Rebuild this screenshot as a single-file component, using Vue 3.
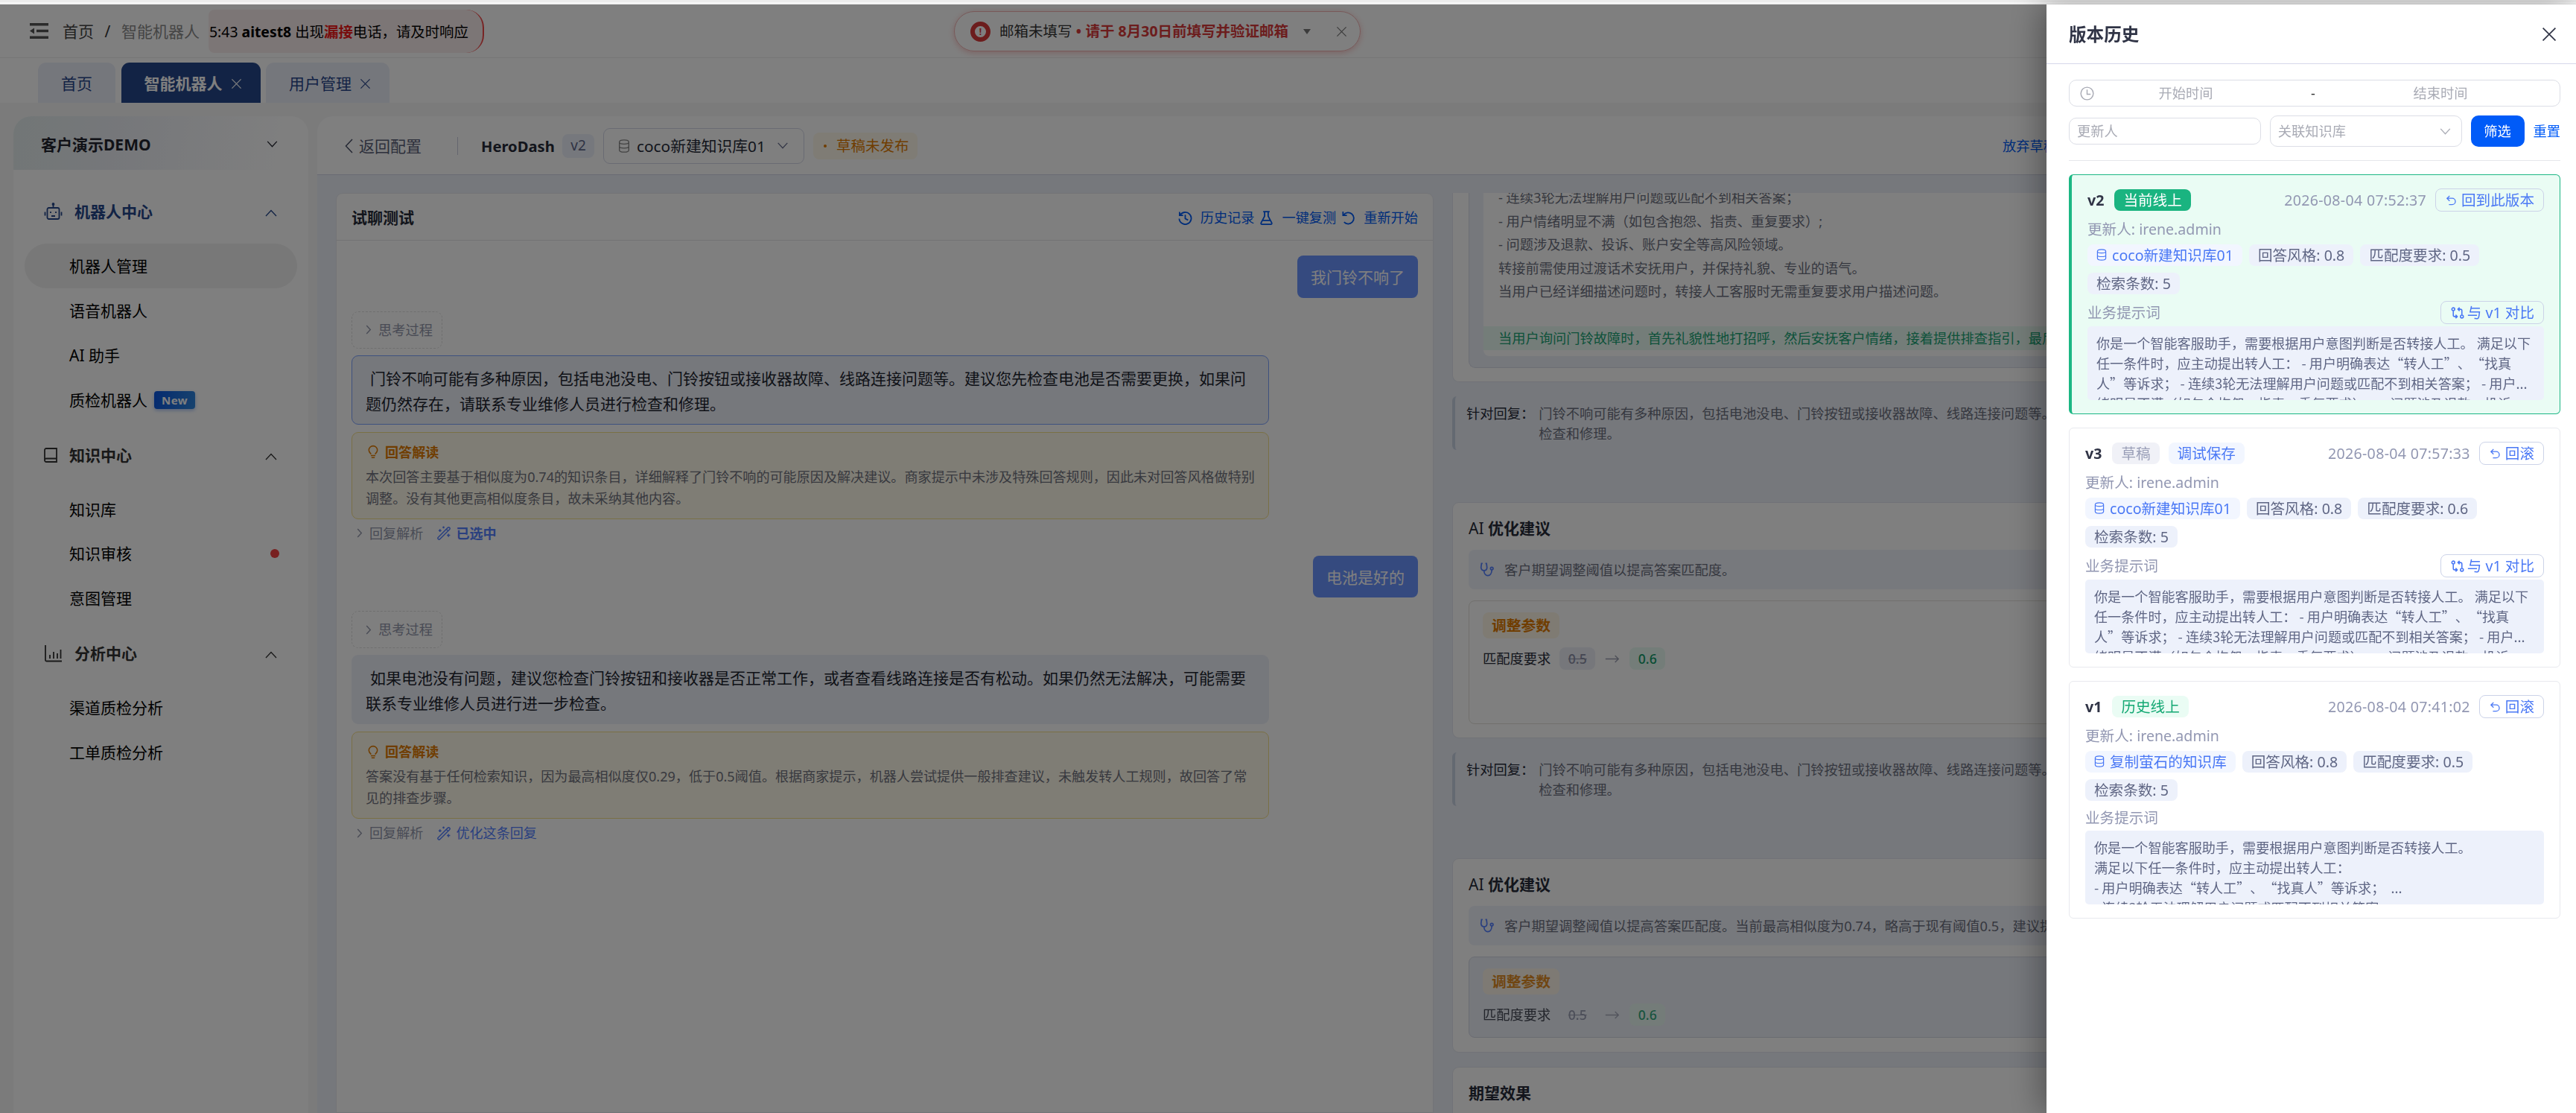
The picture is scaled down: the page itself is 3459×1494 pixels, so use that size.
<script setup>
  import { ref } from 'vue';

  const tabs = [
    { name: '首页' },
    { name: '智能机器人', active: true, closable: true },
    { name: '用户管理', closable: true }
  ];

  const menu = [
    {
      name: '机器人中心', icon: 'robot', size: 25, current: true,
      items: [
        { name: '机器人管理', active: true },
        { name: '语音机器人' },
        { name: 'AI 助手' },
        { name: '质检机器人', isNew: true }
      ]
    },
    {
      name: '知识中心', icon: 'book', size: 18,
      items: [{ name: '知识库' }, { name: '知识审核', dot: true }, { name: '意图管理' }]
    },
    {
      name: '分析中心', icon: 'chart', size: 25,
      items: [{ name: '渠道质检分析' }, { name: '工单质检分析' }]
    }
  ];

  const dialogs = [
    {
      question: '我门铃不响了',
      answer: '门铃不响可能有多种原因，包括电池没电、门铃按钮或接收器故障、线路连接问题等。建议您先检查电池是否需要更换，如果问\n题仍然存在，请联系专业维修人员进行检查和修理。',
      explain: '本次回答主要基于相似度为0.74的知识条目，详细解释了门铃不响的可能原因及解决建议。商家提示中未涉及特殊回答规则，因此未对回答风格做特别\n调整。没有其他更高相似度条目，故未采纳其他内容。',
      action: '已选中',
      selected: true
    },
    {
      question: '电池是好的',
      answer: '如果电池没有问题，建议您检查门铃按钮和接收器是否正常工作，或者查看线路连接是否有松动。如果仍然无法解决，可能需要\n联系专业维修人员进行进一步检查。',
      explain: '答案没有基于任何检索知识，因为最高相似度仅0.29，低于0.5阈值。根据商家提示，机器人尝试提供一般排查建议，未触发转人工规则，故回答了常\n见的排查步骤。',
      action: '优化这条回复'
    }
  ];

  const rules = [
    '- 连续3轮无法理解用户问题或匹配不到相关答案；',
    '- 用户情绪明显不满（如包含抱怨、指责、重复要求）;',
    '- 问题涉及退款、投诉、账户安全等高风险领域。',
    '转接前需使用过渡话术安抚用户，并保持礼貌、专业的语气。',
    '当用户已经详细描述问题时，转接人工客服时无需重复要求用户描述问题。',
    ''
  ];

  const suggestions = [
    { text: '客户期望调整阈值以提高答案匹配度。' },
    {
      text: '客户期望调整阈值以提高答案匹配度。当前最高相似度为0.74，略高于现有阈值0.5，建议提高阈值。',
      done: true
    }
  ];

  const longPrompt = '你是一个智能客服助手，需要根据用户意图判断是否转接人工。 满足以下\n任一条件时，应主动提出转人工： - 用户明确表达“转人工”、“找真\n人”等诉求； - 连续3轮无法理解用户问题或匹配不到相关答案； - 用户...\n绪明显不满（如包含抱怨、指责、重复要求）； - 问题涉及退款、投诉、';

  const versions = [
    {
      id: 'v2', online: true, tags: [{ name: '当前线上', type: 'solid' }],
      time: '2026-08-04 07:52:37', back: '回到此版本', library: 'coco新建知识库01',
      match: '0.5', compare: '与 v1 对比', prompt: longPrompt
    },
    {
      id: 'v3', tags: [{ name: '草稿', type: 'gray' }, { name: '调试保存', type: 'blue' }],
      time: '2026-08-04 07:57:33', back: '回滚', library: 'coco新建知识库01',
      match: '0.6', compare: '与 v1 对比', prompt: longPrompt
    },
    {
      id: 'v1', tags: [{ name: '历史线上', type: 'green' }],
      time: '2026-08-04 07:41:02', back: '回滚', library: '复制萤石的知识库',
      match: '0.5',
      prompt: '你是一个智能客服助手，需要根据用户意图判断是否转接人工。\n满足以下任一条件时，应主动提出转人工：\n- 用户明确表达“转人工”、“找真人”等诉求；  ...\n- 连续3轮无法理解用户问题或匹配不到相关答案；'
    }
  ];

  const drawerVisible = ref(true);
</script>

<template>
  <div class="app" lang="zh-CN">
    <svg class="sprite">
      <symbol id="close" viewBox="0 0 16 16"><path d="M.5 .5l15 15M15.500 .5l-15 15" /></symbol>
      <symbol id="down" viewBox="0 0 16 10"><path d="M1 1l7 7.500L15 1" /></symbol>
      <symbol id="up" viewBox="0 0 16 10"><path d="M1 9l7-7.500L15 9" /></symbol>
      <symbol id="left" viewBox="0 0 11 20"><path d="M10 1L1.500 10l8.500 9" /></symbol>
      <symbol id="right" viewBox="0 0 8 14"><path d="M1 1l5.500 6L1 13" /></symbol>
      <symbol id="robot" viewBox="0 0 24 24">
        <path d="M12 2.500V7M6 7h12a2 2 0 0 1 2 2v11a2 2 0 0 1-2 2H6a2 2 0 0 1-2-2V9a2 2 0 0 1 2-2zM1 12.500v5M23 12.500v5M9.500 18h5M8.500 12v2M15.500 12v2M12 1.500v1.500" />
        <circle cx="12" cy="2" r="1" />
      </symbol>
      <symbol id="book" viewBox="0 0 18 20"><path d="M3 1h14v18H3a2 2 0 0 1-2-2V3a2 2 0 0 1 2-2zM1 16.500a2 2 0 0 1 2-2h14" /></symbol>
      <symbol id="chart" viewBox="0 0 24 24"><path d="M1.500 1v20a1.500 1.500 0 0 0 1.500 1.500h20.500M7.500 14v5M12.500 10v9M17.500 12v7M22 7v12" /></symbol>
      <symbol id="db" viewBox="0 0 16 20">
        <path d="M1 4c0-4 14-4 14 0v12c0 4-14 4-14 0zM1 4.500c0 3.500 14 3.500 14 0M1 10.500c0 3.500 14 3.500 14 0" />
      </symbol>
      <symbol id="history" viewBox="0 0 20 20"><path d="M2.500 6.500A8.500 8.500 0 1 1 1.500 11M2 1.500v5h5M10 5.500V11l4 2" /></symbol>
      <symbol id="reload" viewBox="0 0 20 20"><path d="M3.500 5.500A8 8 0 1 1 4 16M2.500 1v5.500H8" /></symbol>
      <symbol id="flask" viewBox="0 0 18 20"><path d="M4.500 1.200h9M6.500 1.500v6L1.500 17c-.5 1.200 0 2 1.300 2h12.400c1.300 0 1.800-.8 1.300-2l-5-9.500v-6M4 13.500h10" /></symbol>
      <symbol id="bulb" viewBox="0 0 16 20"><path d="M5 13.500C3.500 12 1.500 10.500 1.500 7.300a6.500 6.300 0 0 1 13 0c0 3.200-2 4.700-3.500 6.200M4.500 15.800h7M5.500 18.800h5" /></symbol>
      <symbol id="wand" viewBox="0 0 20 20">
        <path d="M1.500 16L15 2.500a1.600 1.600 0 0 1 2.500 2.500L4 18.500a1.600 1.600 0 0 1-2.500-2.500zM13 4.500l2.500 2.500M4 4.500v4M2 6.500h4M9 .5v3M7.500 2h3M16 11v4.500M13.800 13.200h4.500" />
      </symbol>
      <symbol id="steth" viewBox="0 0 20 20">
        <path d="M4 1.500H2.500L1.800 7c.2 3 2 4.500 4.200 4.500s4.200-1.500 4.200-4.500l-.7-5.500H8M6 11.500c0 9.500 11 9.500 11-1" />
        <circle cx="17" cy="8.500" r="1.900" />
      </symbol>
      <symbol id="clock" viewBox="0 0 20 20"><circle cx="10" cy="10" r="8.800" /><path d="M10 4.500V11h5" /></symbol>
      <symbol id="undo" viewBox="0 0 16 16"><path d="M5.500 1L1.500 4.800l4 4M1.500 4.800h8a4.800 4.800 0 0 1 0 9.600H4.500" /></symbol>
      <symbol id="compare" viewBox="0 0 20 18">
        <circle cx="3.500" cy="3.500" r="2.200" /><circle cx="16.500" cy="14.500" r="2.200" />
        <path d="M3.500 6v6.500a2 2 0 0 0 2 2H9M7 12l2.500 2.500L7 17M16.500 12V5.500a2 2 0 0 0-2-2H11M13 1l-2.500 2.500L13 6" />
      </symbol>
      <symbol id="arrow" viewBox="0 0 20 12"><path d="M0 6h19M14 1l5 5-5 5" /></symbol>
    </svg>

    <div class="browser-edge"></div>

    <header class="topbar">
      <svg class="fold" viewBox="0 0 25 21">
        <path d="M0 0h25v3.500H0zM9 8.700h16v3.500H9zM0 17.500h25V21H0zM0 10.500l6-4v8z" />
      </svg>
      <span class="crumb">首页</span>
      <span class="slash">/</span>
      <span class="crumb muted">智能机器人</span>
      <div class="missed">5:43 <b>aitest8</b> 出现<b class="red">漏接</b>电话，请及时响应</div>
      <div class="mail">
        <i class="warn">!</i>
        <span class="mail-label">邮箱未填写</span>
        <b class="mail-dot">•</b>
        <b class="mail-text">请于 8月30日前填写并验证邮箱</b>
        <i class="triangle"></i>
        <svg class="ico mail-close"><use href="#close" /></svg>
      </div>
    </header>

    <nav class="tabs">
      <div v-for="tab in tabs" :key="tab.name" class="tab" :class="{ active: tab.active }">
        {{ tab.name }}
        <svg v-if="tab.closable" class="ico tab-close"><use href="#close" /></svg>
      </div>
    </nav>

    <div class="layout">
      <aside class="sidebar">
        <div class="customer">
          客户演示DEMO
          <svg class="ico chev-down"><use href="#down" /></svg>
        </div>
        <div v-for="group in menu" :key="group.name" class="group" :class="{ current: group.current }">
          <div class="group-title">
            <svg class="ico" :style="{ width: group.size + 'px' }"><use :href="'#' + group.icon" /></svg>
            {{ group.name }}
            <svg class="ico chev-up"><use href="#up" /></svg>
          </div>
          <div v-for="item in group.items" :key="item.name" class="item" :class="{ active: item.active }">
            {{ item.name }}
            <span v-if="item.isNew" class="new">New</span>
            <i v-if="item.dot" class="dot"></i>
          </div>
        </div>
      </aside>

      <main class="main">
        <div class="main-head">
          <svg class="ico back-icon"><use href="#left" /></svg>
          <span class="back">返回配置</span>
          <i class="divider"></i>
          <b class="bot-name">HeroDash</b>
          <span class="ver">v2</span>
          <div class="lib-select">
            <svg class="ico lib-db"><use href="#db" /></svg>
            <span class="lib-name">coco新建知识库01</span>
            <svg class="ico lib-chev"><use href="#down" /></svg>
          </div>
          <span class="draft"><i></i>草稿未发布</span>
          <span class="discard">放弃草稿</span>
        </div>

        <div class="content">
          <section class="chat">
            <div class="chat-head">
              <b>试聊测试</b>
              <div class="chat-actions">
                <svg class="ico"><use href="#history" /></svg><span>历史记录</span>
                <svg class="ico"><use href="#flask" /></svg><span>一键复测</span>
                <svg class="ico"><use href="#reload" /></svg><span>重新开始</span>
              </div>
            </div>
            <div class="chat-body">
              <div v-for="d in dialogs" :key="d.question" class="dialog">
                <div class="question">{{ d.question }}</div>
                <div class="think"><svg class="ico chev-right"><use href="#right" /></svg>思考过程</div>
                <div class="answer" :class="{ selected: d.selected }">{{ d.answer }}</div>
                <div class="explain">
                  <div class="explain-title"><svg class="ico"><use href="#bulb" /></svg>回答解读</div>
                  <p>{{ d.explain }}</p>
                </div>
                <div class="links">
                  <svg class="ico chev-right"><use href="#right" /></svg>回复解析
                  <span class="optimize" :class="{ bold: d.selected }">
                    <svg class="ico"><use href="#wand" /></svg>{{ d.action }}
                  </span>
                </div>
              </div>
            </div>
          </section>

          <section class="advice">
            <div class="card first">
              <div class="rule-box">
                <div class="rules">
                  <p v-for="(rule, i) in rules" :key="i">{{ rule }}</p>
                  <p class="added">当用户询问门铃故障时，首先礼貌性地打招呼，然后安抚客户情绪，接着提供排查指引，最后引导</p>
                </div>
              </div>
            </div>
            <template v-for="s in suggestions" :key="s.text">
              <div class="quote">
                <span class="quote-label">针对回复：</span>
                <p>门铃不响可能有多种原因，包括电池没电、门铃按钮或接收器故障、线路连接问题等。<br>检查和修理。</p>
              </div>
              <div class="card suggest" :class="{ done: s.done }">
                <div class="card-title"><span>AI</span> 优化建议</div>
                <div class="diagnosis"><svg class="ico"><use href="#steth" /></svg>{{ s.text }}</div>
                <div class="adjust">
                  <span class="adjust-tag">调整参数</span>
                  <div class="param">
                    匹配度要求
                    <span class="old">0.5</span>
                    <svg class="ico"><use href="#arrow" /></svg>
                    <span class="new-value">0.6</span>
                  </div>
                </div>
              </div>
            </template>
            <div class="card expect"><div class="card-title">期望效果</div></div>
          </section>
        </div>
      </main>
    </div>

    <div v-if="drawerVisible" class="mask">
      <div class="drawer">
        <div class="drawer-head">
          版本历史
          <svg class="ico drawer-close" @click="drawerVisible = false"><use href="#close" /></svg>
        </div>
        <div class="drawer-body">
          <div class="range">
            <svg class="ico"><use href="#clock" /></svg>
            <span class="range-item">开始时间</span>
            <span class="range-sep">-</span>
            <span class="range-item">结束时间</span>
          </div>
          <div class="filters">
            <div class="field updater-input">更新人</div>
            <div class="field kb-select">关联知识库<svg class="ico"><use href="#down" /></svg></div>
            <button class="search">筛选</button>
            <a class="reset">重置</a>
          </div>
          <div v-for="v in versions" :key="v.id" class="version" :class="{ online: v.online }">
            <div class="version-head">
              <b>{{ v.id }}</b>
              <span v-for="tag in v.tags" :key="tag.name" class="tag" :class="tag.type">{{ tag.name }}</span>
              <time>{{ v.time }}</time>
              <span class="btn"><svg class="ico undo"><use href="#undo" /></svg>{{ v.back }}</span>
            </div>
            <div class="updater">更新人: irene.admin</div>
            <div class="chips">
              <span class="chip lib"><svg class="ico"><use href="#db" /></svg>{{ v.library }}</span>
              <span class="chip">回答风格: 0.8</span>
              <span class="chip">匹配度要求: {{ v.match }}</span>
              <span class="chip">检索条数: 5</span>
            </div>
            <div class="prompt-head">
              业务提示词
              <span v-if="v.compare" class="btn"><svg class="ico compare"><use href="#compare" /></svg>{{ v.compare }}</span>
            </div>
            <div class="prompt">{{ v.prompt }}</div>
          </div>
        </div>
      </div>
    </div>
  </div>
</template>

<style>
  body {
    margin: 0;
    overflow: hidden;
  }
</style>

<style scoped>
  .app {
    position: relative;
    width: 100vw;
    height: 100vh;
    overflow: hidden;
    display: flex;
    flex-direction: column;
    background: #f7f7f7;
    color: #000;
    font: 21px/28px "Noto Sans", "Noto Sans CJK SC", sans-serif;
    text-spacing-trim: space-all;
    white-space: nowrap;
  }

  .app *,
  .mask {
    box-sizing: border-box;
  }

  p {
    margin: 0;
  }

  i {
    font-style: normal;
  }

  .sprite {
    position: absolute;
    width: 0;
    height: 0;
  }

  .ico {
    flex: none;
    fill: none;
    stroke: currentColor;
    stroke-width: 1.5;
    overflow: visible;
  }

  .browser-edge {
    flex: none;
    height: 6px;
    background: linear-gradient(#ececec 0 50%, #f6f6f6 50% 80%, #e9e9e9 80%);
  }

  /* top bar */
  .topbar {
    flex: none;
    position: relative;
    display: flex;
    align-items: center;
    height: 72px;
    padding-left: 40px;
    background: #fff;
    border-bottom: 1px solid #ededed;
  }

  .fold {
    width: 25px;
    height: 21px;
    margin-right: 19px;
    fill: #555;
  }

  .crumb {
    color: #444;
  }

  .slash {
    width: 37px;
    text-align: center;
    color: #333;
  }

  .crumb.muted {
    color: #8a8a8a;
  }

  .missed {
    height: 58px;
    margin-left: 12px;
    padding: 0 19px 0 1px;
    border-right: 2px solid #f04848;
    border-radius: 8px 24px 24px 8px;
    background: #f9eded;
    font-size: 19.400px;
    line-height: 59px;
  }

  .red {
    color: #f01818;
  }

  .mail {
    position: absolute;
    left: 1281px;
    top: 9px;
    display: flex;
    align-items: center;
    width: 546px;
    height: 54px;
    padding-left: 21px;
    border: 1px solid #f0b0b0;
    border-radius: 27px;
    box-shadow: 0 2px 9px rgba(230, 60, 60, 0.3);
    color: #333;
    font-size: 19.500px;
  }

  .warn {
    width: 27px;
    height: 27px;
    margin-right: 12px;
    border: 6px solid #d93a3a;
    border-radius: 50%;
    color: #d93a3a;
    font-size: 12px;
    font-weight: 700;
    line-height: 15px;
    text-align: center;
  }

  .mail-dot,
  .mail-text {
    color: #d93a3a;
  }

  .mail-dot {
    width: 18px;
    text-align: center;
  }

  .triangle {
    margin: 0 35px 0 20px;
    border: 5.500px solid transparent;
    border-top: 7px solid #777;
    border-bottom: 0;
  }

  .mail-close {
    width: 13px;
    height: 13px;
    color: #777;
  }

  /* tabs */
  .tabs {
    flex: none;
    display: flex;
    gap: 7.500px;
    height: 60px;
    padding: 6px 0 0 51px;
    background: #fff;
  }

  .tab {
    display: flex;
    align-items: center;
    padding: 2px 31px 0;
    border-radius: 11px 11px 0 0;
    background: #ebeef9;
    color: #29468a;
  }

  .tab:not(:first-child) {
    padding-right: 26px;
  }

  .tab.active {
    background: #24468a;
    color: #fff;
    font-weight: 700;
  }

  .tab-close {
    width: 13px;
    height: 13px;
    margin-left: 12px;
  }

  .layout {
    flex: 1;
    display: flex;
    min-height: 0;
    gap: 12px;
    padding: 18px 0 0 18px;
  }

  /* sidebar */
  .sidebar {
    flex: none;
    width: 396px;
    border-radius: 24px 24px 0 0;
    background: #fff;
    overflow: hidden;
  }

  .customer {
    display: flex;
    align-items: center;
    justify-content: space-between;
    height: 72px;
    margin-bottom: 20px;
    padding: 3px 41px 0 37px;
    background: linear-gradient(100deg, #e4eded, #eceff5 35%, #fff 92%);
    color: #22242e;
    font-weight: 700;
  }

  .chev-down {
    width: 15px;
    height: 9px;
  }

  .group {
    color: #333;
  }

  .group-title {
    display: flex;
    align-items: center;
    height: 72px;
    margin-bottom: 7px;
    padding: 0 41px;
    font-weight: 700;
  }

  .group-title .ico {
    height: 24px;
    margin-right: 16px;
    stroke-width: 1.800;
  }

  .group-title .chev-up {
    width: 18px;
    height: 10px;
    margin: 4px 0 0 auto;
    stroke-width: 1.300;
  }

  .group.current {
    color: #24468a;
  }

  .group + .group {
    margin-top: 8px;
  }

  .item {
    display: flex;
    align-items: center;
    height: 59.900px;
    margin: 0 15px;
    padding-left: 60px;
    border-radius: 30px;
    color: #000;
  }

  .item.active {
    background: #f0f0f0;
  }

  .new {
    height: 24px;
    margin-left: 9px;
    padding: 0 10px;
    border-radius: 4px;
    background: linear-gradient(100deg, #0a55e0, #2f86dc);
    box-shadow: 0 2px 5px rgba(20, 90, 220, 0.35);
    color: #fff;
    font-size: 15px;
    font-weight: 700;
    line-height: 25px;
    letter-spacing: 0.500px;
  }

  .dot {
    width: 12px;
    height: 12px;
    margin: 0 24px 0 auto;
    border-radius: 50%;
    background: #f04040;
  }

  /* workspace */
  .main {
    flex: 1;
    display: flex;
    flex-direction: column;
    min-width: 0;
    border-radius: 21px 0 0 0;
    background: #ecf0f9;
    overflow: hidden;
  }

  .main-head {
    flex: none;
    position: relative;
    display: flex;
    align-items: center;
    height: 79px;
    padding-left: 37px;
    padding-top: 1px;
    border-bottom: 1px solid #d3d7e6;
    background: #fff;
    color: #262b38;
  }

  .main-head > * {
    flex: none;
  }

  .back-icon {
    width: 11px;
    height: 20px;
    margin-right: 8px;
    color: #4b5168;
  }

  .back {
    color: #5a6078;
  }

  .divider {
    width: 1px;
    height: 24px;
    margin: 0 31px 0 48px;
    background: #c8ccdc;
  }

  .bot-name {
    width: 109px;
    font-size: 20.200px;
  }

  .ver {
    width: 43px;
    height: 32px;
    margin-right: 12px;
    border-radius: 8px;
    background: #edf1fb;
    color: #5f6788;
    font-size: 19px;
    line-height: 31px;
    text-align: center;
  }

  .lib-select {
    display: flex;
    align-items: center;
    width: 270px;
    height: 48px;
    padding: 0 20px 0 19px;
    border: 1px solid #d3d6e6;
    border-radius: 9px;
  }

  .lib-db {
    width: 16px;
    height: 18px;
    margin-right: 9px;
    color: #888;
  }

  .lib-name {
    font-size: 20.800px;
  }

  .lib-chev {
    width: 16px;
    height: 9px;
    margin-left: auto;
    color: #6b7090;
  }

  .draft {
    display: flex;
    align-items: center;
    width: 140px;
    height: 36px;
    margin-left: 12px;
    padding-left: 14px;
    border-radius: 8px;
    background: #fff9ea;
    color: #e07b00;
    font-size: 19.500px;
  }

  .draft i {
    width: 4px;
    height: 4px;
    margin-right: 13px;
    border-radius: 50%;
    background: currentColor;
  }

  .discard {
    margin-left: 1457px;
    color: #005bf5;
    font-size: 18.250px;
  }

  .content {
    flex: 1;
    display: flex;
    gap: 25px;
    min-height: 0;
    padding: 24px 0 0 25px;
  }

  .chat {
    flex: none;
    width: 1474px;
    border: 1px solid #e6e8ef;
    border-radius: 9px 9px 0 0;
    background: #fff;
  }

  .chat-head {
    display: flex;
    align-items: center;
    justify-content: space-between;
    height: 63px;
    padding: 2px 20px 0;
    border-bottom: 1px solid #e4e5e9;
    color: #262b38;
  }

  .chat-actions {
    display: flex;
    align-items: center;
    color: #005bf5;
    font-size: 18.200px;
  }

  .chat-actions .ico {
    width: 19px;
    height: 19px;
    margin: 0 11px 0 7px;
    stroke-width: 1.900;
  }

  .chat-body {
    padding: 20px 20px 0;
  }

  .dialog {
    display: flex;
    flex-direction: column;
    align-items: flex-start;
    margin-bottom: 17px;
  }

  .question {
    align-self: flex-end;
    height: 56.500px;
    padding: 0 18px;
    border-radius: 8px;
    background: #6b95ff;
    color: #fff;
    line-height: 58px;
  }

  .think {
    display: flex;
    align-items: center;
    width: 122px;
    height: 50px;
    margin-top: 18px;
    padding-left: 18px;
    border: 1px dashed #dedede;
    border-radius: 9px;
    color: #9297ab;
    font-size: 18.250px;
  }

  .chev-right {
    width: 8px;
    height: 13px;
    margin-right: 9px;
  }

  .answer {
    width: 1232px;
    height: 93px;
    margin-top: 9px;
    padding: 13px 18px;
    border: 1px solid transparent;
    border-radius: 9px;
    background: #edf0f9;
    color: #20242f;
    line-height: 34px;
    text-indent: 6px;
    white-space: pre;
  }

  .answer.selected {
    border-color: #7da2ff;
  }

  .explain {
    width: 1232px;
    height: 117px;
    margin-top: 10px;
    padding: 12px 18px;
    border: 1px solid #f5e08a;
    border-radius: 9px;
    background: #fffaeb;
    color: #70737e;
    font-size: 18.100px;
    line-height: 29px;
  }

  .explain p {
    margin-top: 5px;
    white-space: pre;
  }

  .explain-title {
    display: flex;
    align-items: center;
    color: #e07b00;
    font-weight: 700;
    line-height: 28px;
  }

  .explain-title .ico {
    width: 14px;
    height: 19px;
    margin: 0 9px 0 3px;
    stroke-width: 1.800;
  }

  .links {
    display: flex;
    align-items: center;
    height: 26px;
    margin-top: 6px;
    padding-left: 7px;
    color: #9297ab;
    font-size: 18.100px;
  }

  .optimize {
    display: flex;
    align-items: center;
    margin-left: 19px;
    color: #5581ff;
  }

  .optimize .ico {
    width: 19px;
    height: 19px;
    margin-right: 6px;
  }

  .bold {
    font-weight: 700;
  }

  /* advice column */
  .advice {
    flex: 1;
    min-width: 0;
    overflow: hidden;
    color: #262b38;
    font-size: 18.250px;
  }

  .card {
    padding: 20px 21px 17px;
    border: 1px solid #e2e5ee;
    border-radius: 9px;
    background: #fff;
  }

  .card.first {
    height: 254px;
    padding: 0 0 18px 21px;
    border-top: 0;
    border-radius: 0 0 9px 9px;
  }

  .rule-box {
    height: 235px;
    padding: 0 0 15px 19px;
    border: solid #d9dde9;
    border-width: 0 0 1px 1px;
    border-radius: 0 0 0 9px;
    background: #ecf0f9;
    overflow: hidden;
  }

  .rules {
    height: 219px;
    border-radius: 0 0 0 8px;
    background: #fff;
    color: #6c7080;
    line-height: 31.500px;
    overflow: hidden;
  }

  .rules p {
    height: 31.500px;
    padding-left: 20px;
  }

  .rules p:first-child {
    margin-top: -10px;
  }

  .rules .added {
    background: #e9faf2;
    color: #1ba475;
  }

  .quote {
    display: flex;
    gap: 6px;
    height: 72px;
    margin: 19px 0 70px;
    padding: 9px 0 0 15px;
    border-left: 4px solid #c9d3e3;
    border-radius: 6px 0 0 6px;
    line-height: 27px;
  }

  .quote p {
    color: #6c7080;
  }

  .suggest {
    height: 317px;
  }

  .suggest.done {
    height: 261px;
  }

  .card-title {
    height: 29px;
    font-size: 21px;
    font-weight: 700;
  }

  .card-title span {
    font-weight: 400;
  }

  .diagnosis {
    display: flex;
    align-items: center;
    height: 53px;
    margin: 14px -21px 15px 0;
    padding-left: 15px;
    border-radius: 8px 0 0 8px;
    background: #eff2fa;
    color: #6c7080;
  }

  .diagnosis .ico {
    width: 19px;
    height: 19px;
    margin-right: 14px;
    color: #5581ff;
    stroke-width: 1.800;
  }

  .adjust {
    height: 166px;
    margin-right: -21px;
    padding: 15px 18px;
    border: 1px solid #e3e1da;
    border-radius: 8px 0 0 8px;
  }

  .done .adjust {
    height: 109px;
    border-color: #d5d9e5;
    background: #ecf0f9;
  }

  .adjust-tag {
    display: block;
    width: 103px;
    height: 35px;
    margin-bottom: 12px;
    border-radius: 8px;
    background: #fff7e6;
    color: #e07b00;
    font-size: 19.800px;
    font-weight: 700;
    line-height: 35px;
    text-align: center;
  }

  .param {
    display: flex;
    align-items: center;
    height: 30px;
  }

  .old,
  .new-value {
    width: 48px;
    height: 30px;
    border-radius: 8px;
    font-size: 17.500px;
    font-weight: 500;
    line-height: 31px;
    text-align: center;
  }

  .old {
    margin-left: 12px;
    background: #eceef6;
    color: #8b8fa6;
    text-decoration: line-through;
  }

  .param .ico {
    width: 20px;
    height: 11px;
    margin: 0 13px;
    color: #9a9eb0;
  }

  .new-value {
    background: #e9faf2;
    color: #109b69;
  }

  .done .adjust > * {
    opacity: 0.850;
  }

  .done .old {
    background: none;
  }

  .expect {
    height: 200px;
    margin-top: 19px;
  }

  /* version history drawer */
  .mask {
    position: absolute;
    inset: 6px 0 0;
    display: flex;
    justify-content: flex-end;
    background: rgba(0, 0, 0, 0.5);
  }

  .drawer {
    width: 711px;
    height: 100%;
    background: #fff;
    box-shadow: -8px 0 40px rgba(0, 0, 0, 0.35);
    font-size: 19.600px;
  }

  .drawer-head {
    display: flex;
    align-items: center;
    justify-content: space-between;
    height: 80px;
    padding: 0 27px 0 30px;
    border-bottom: 1px solid #d6d8ea;
    color: #303446;
    font-size: 23.600px;
    font-weight: 700;
  }

  .drawer-close {
    width: 18px;
    height: 18px;
  }

  .drawer-body {
    padding: 21px 21px 0 30px;
  }

  .range,
  .field {
    display: flex;
    align-items: center;
    height: 36px;
    border: 1.500px solid #dcdee6;
    border-radius: 10px;
    color: #a9abb5;
    font-size: 18.250px;
  }

  .range {
    padding: 0 37px 0 14px;
  }

  .range .ico {
    width: 19px;
    height: 19px;
  }

  .range-item {
    flex: 1;
    text-align: center;
  }

  .range-sep {
    width: 96px;
    color: #333;
    text-align: center;
  }

  .filters {
    display: flex;
    align-items: center;
    gap: 12px;
    height: 73px;
    margin-bottom: 18px;
    padding-bottom: 6px;
    border-bottom: 1px solid #e6e7eb;
    font-size: 18.250px;
  }

  .field {
    width: 258px;
    padding: 0 14px 0 10px;
  }

  .kb-select {
    justify-content: space-between;
    height: 42px;
  }

  .kb-select .ico {
    width: 15px;
    height: 9px;
  }

  .search {
    width: 72px;
    height: 42px;
    padding: 0;
    border: 0;
    border-radius: 10px;
    background: #005bf8;
    color: #fff;
    font: inherit;
  }

  .reset {
    color: #005bf8;
  }

  .version {
    display: flex;
    flex-direction: column;
    margin-bottom: 18px;
    padding: 18px 21px;
    border: 1px solid #e8e9ee;
    border-radius: 6px;
    color: #5f6684;
  }

  .version.online {
    border-color: #1cb784;
    border-left-width: 4px;
    background: #eafcf4;
  }

  .version-head {
    display: flex;
    align-items: center;
    height: 31px;
    margin-bottom: 10px;
  }

  .version-head b {
    margin-right: 2px;
    color: #303446;
  }

  .tag {
    height: 29px;
    margin-left: 12px;
    padding: 0 12px;
    border-radius: 8px;
    line-height: 30px;
  }

  .tag.solid {
    background: #1ab480;
    color: #fff;
  }

  .tag.gray {
    background: #f0f1f7;
    color: #9a9fb8;
  }

  .tag.blue {
    background: #f2f6ff;
    color: #4a78f5;
  }

  .tag.green {
    background: #eafcf4;
    color: #14a873;
  }

  time {
    margin: 0 12px 0 auto;
    color: #9297b2;
    letter-spacing: 0.300px;
  }

  .btn {
    display: flex;
    align-items: center;
    height: 31px;
    padding: 0 12px 0 13px;
    border: 1px solid #ccd3e8;
    border-radius: 8px;
    color: #4a78f5;
  }

  .undo {
    width: 15px;
    height: 14px;
    margin-right: 6px;
  }

  .compare {
    width: 18px;
    height: 16px;
    margin-right: 4px;
    stroke-width: 1.800;
  }

  .updater {
    height: 26px;
    margin-bottom: 8px;
    color: #9297b2;
    line-height: 27px;
  }

  .chips {
    display: flex;
    flex-wrap: wrap;
    gap: 9px;
    margin-bottom: 9px;
  }

  .chip {
    display: flex;
    align-items: center;
    height: 29px;
    padding: 1px 12px 0;
    border-radius: 8px;
    background: #edf1fb;
  }

  .chip.lib {
    background: #f2f6ff;
    color: #4a78f5;
  }

  .chip .ico {
    width: 14px;
    height: 16px;
    margin: -3px 7px 0 0;
  }

  .prompt-head {
    display: flex;
    align-items: center;
    justify-content: space-between;
    min-height: 26px;
    margin-bottom: 3px;
    color: #9297b2;
  }

  .prompt {
    height: 99px;
    padding: 9px 12px 0;
    border-radius: 5px;
    background: #edf1fb;
    font: 18.100px/27px "Noto Sans CJK SC", sans-serif;
    white-space: pre;
    overflow: hidden;
  }
</style>
